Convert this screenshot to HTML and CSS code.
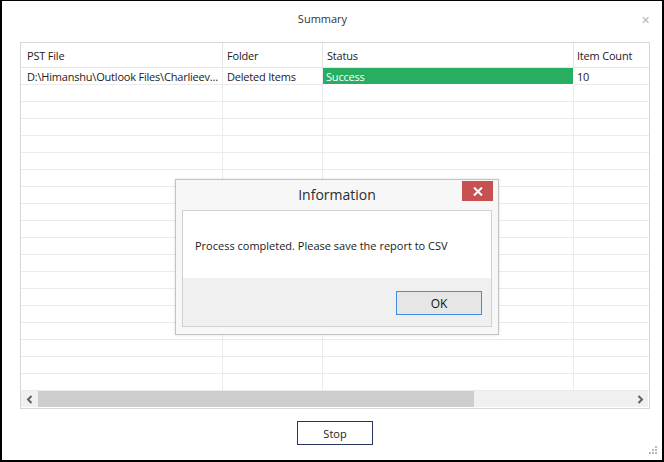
FILE: index.html
```html
<!DOCTYPE html>
<html>
<head>
<meta charset="utf-8">
<link rel="stylesheet" href="styles.css">
</head>
<body>
<div class="window">
  <div class="titlebar">
    <span class="title">Summary</span>
    <span class="close">&#x2715;</span>
  </div>
  <div class="grid">
    <div class="row head">
      <div class="cell c1">PST File</div>
      <div class="cell c2">Folder</div>
      <div class="cell c3">Status</div>
      <div class="cell c4">Item Count</div>
    </div>
    <div class="body">
      <div class="row">
        <div class="cell c1">D:\Himanshu\Outlook Files\Charlieev...</div>
        <div class="cell c2">Deleted Items</div>
        <div class="cell c3 ok">Success</div>
        <div class="cell c4">10</div>
      </div>
      <div class="row"><div class="cell c1"></div><div class="cell c2"></div><div class="cell c3"></div><div class="cell c4"></div></div>
      <div class="row"><div class="cell c1"></div><div class="cell c2"></div><div class="cell c3"></div><div class="cell c4"></div></div>
      <div class="row"><div class="cell c1"></div><div class="cell c2"></div><div class="cell c3"></div><div class="cell c4"></div></div>
      <div class="row"><div class="cell c1"></div><div class="cell c2"></div><div class="cell c3"></div><div class="cell c4"></div></div>
      <div class="row"><div class="cell c1"></div><div class="cell c2"></div><div class="cell c3"></div><div class="cell c4"></div></div>
      <div class="row"><div class="cell c1"></div><div class="cell c2"></div><div class="cell c3"></div><div class="cell c4"></div></div>
      <div class="row"><div class="cell c1"></div><div class="cell c2"></div><div class="cell c3"></div><div class="cell c4"></div></div>
      <div class="row"><div class="cell c1"></div><div class="cell c2"></div><div class="cell c3"></div><div class="cell c4"></div></div>
      <div class="row"><div class="cell c1"></div><div class="cell c2"></div><div class="cell c3"></div><div class="cell c4"></div></div>
      <div class="row"><div class="cell c1"></div><div class="cell c2"></div><div class="cell c3"></div><div class="cell c4"></div></div>
      <div class="row"><div class="cell c1"></div><div class="cell c2"></div><div class="cell c3"></div><div class="cell c4"></div></div>
      <div class="row"><div class="cell c1"></div><div class="cell c2"></div><div class="cell c3"></div><div class="cell c4"></div></div>
      <div class="row"><div class="cell c1"></div><div class="cell c2"></div><div class="cell c3"></div><div class="cell c4"></div></div>
      <div class="row"><div class="cell c1"></div><div class="cell c2"></div><div class="cell c3"></div><div class="cell c4"></div></div>
      <div class="row"><div class="cell c1"></div><div class="cell c2"></div><div class="cell c3"></div><div class="cell c4"></div></div>
      <div class="row"><div class="cell c1"></div><div class="cell c2"></div><div class="cell c3"></div><div class="cell c4"></div></div>
      <div class="row"><div class="cell c1"></div><div class="cell c2"></div><div class="cell c3"></div><div class="cell c4"></div></div>
      <div class="row"><div class="cell c1"></div><div class="cell c2"></div><div class="cell c3"></div><div class="cell c4"></div></div>
    </div>
    <div class="hscroll">
      <span class="arrow"><svg width="8" height="9" viewBox="0 0 8 9"><path d="M5.5 1 L2 4.5 L5.5 8" fill="none" stroke="#606060" stroke-width="2"/></svg></span>
      <div class="track"><div class="thumb"></div></div>
      <span class="arrow"><svg width="8" height="9" viewBox="0 0 8 9"><path d="M2.5 1 L6 4.5 L2.5 8" fill="none" stroke="#606060" stroke-width="2"/></svg></span>
    </div>
  </div>
  <div class="footer">
    <button class="stop">Stop</button>
  </div>
  <svg class="grip" width="8" height="8" viewBox="0 0 8 8">
    <rect x="6" y="0" width="2" height="2" fill="#b8b8b8"/>
    <rect x="3" y="3" width="2" height="2" fill="#b8b8b8"/>
    <rect x="6" y="3" width="2" height="2" fill="#b8b8b8"/>
    <rect x="0" y="6" width="2" height="2" fill="#b8b8b8"/>
    <rect x="3" y="6" width="2" height="2" fill="#b8b8b8"/>
    <rect x="6" y="6" width="2" height="2" fill="#b8b8b8"/>
  </svg>

  <div class="dialog">
    <div class="dlg-title">
      <span class="dlg-caption">Information</span>
      <span class="dlg-close"><svg width="10" height="9" viewBox="0 0 10 9"><path d="M1 0.5 L9 8.5 M9 0.5 L1 8.5" stroke="#fff" stroke-width="2"/></svg></span>
    </div>
    <div class="dlg-body">
      <div class="dlg-msg">Process completed. Please save the report to CSV</div>
      <div class="dlg-buttons"><button class="okbtn">OK</button></div>
    </div>
  </div>
</div>
</body>
</html>
```

FILE: styles.css
```css
* { box-sizing: border-box; }
html, body { margin: 0; padding: 0; background: #fff; }
body { font-family: "Open Sans", "Noto Sans", sans-serif; color: #1a1a1a; }

.window {
  position: relative;
  width: 664px;
  height: 462px;
  border: 1px solid #000;
  border-left-width: 2px;
  border-right-width: 2px;
  border-bottom-width: 2px;
  background: #fff;
  overflow: hidden;
}

.titlebar {
  height: 41px;
  display: flex;
  align-items: center;
  justify-content: center;
  position: relative;
}
.title {
  font-size: 11px;
  color: #333;
  margin-top: -7px;
  margin-left: -19px;
}
.close {
  position: absolute;
  right: 12px;
  top: 11px;
  font-size: 11px;
  color: #b5b5b5;
}

.grid {
  margin-left: 18px;
  width: 630px;
  height: 367px;
  border: 1px solid #d6d6d6;
  display: flex;
  flex-direction: column;
  font-family: "Open Sans", sans-serif;
  font-size: 11px;
  color: #222;
}
.row {
  display: flex;
  height: 17px;
  flex: none;
}
.row.head { height: 25px; }
.cell {
  border-right: 1px solid #ebebeb;
  border-bottom: 1px solid #ebebeb;
  padding-left: 5px;
  white-space: nowrap;
  overflow: hidden;
  display: flex;
  align-items: center;
  letter-spacing: -0.2px;
}
.head .cell { border-bottom-color: #e4e4e4; border-right-color: #e4e4e4; padding-top: 1px; }
.c1 { width: 202px; padding-left: 6px; }
.c2 { width: 100px; padding-left: 4px; }
.c3 { width: 251px; padding-left: 4px; }
.c4 { flex: 1; border-right: none; padding-left: 3px; }
.ok { background: #27ae60; color: #fff; border-right-color: #fff; border-bottom-color: #fff; padding-left: 3px; }

.body {
  height: 323px;
  overflow: hidden;
  flex: none;
}

.hscroll {
  height: 16px;
  margin: 0 1px 0 0;
  display: flex;
  align-items: stretch;
  background: #f0f0f0;
  flex: none;
}
.arrow {
  width: 17px;
  display: flex;
  align-items: center;
  justify-content: center;
}
.track { flex: 1; position: relative; }
.thumb {
  position: absolute;
  left: 0;
  top: 0;
  width: 436px;
  height: 100%;
  background: #cdcdcd;
}

.footer {
  display: flex;
  justify-content: center;
  padding-top: 12px;
  padding-left: 6px;
}
.stop {
  width: 76px;
  height: 24px;
  border: 1px solid #24365f;
  background: #fff;
  font-family: "Open Sans", sans-serif;
  font-size: 11px;
  color: #222;
  padding: 0;
}

.grip {
  position: absolute;
  right: 5px;
  bottom: 6px;
}

.dialog {
  position: absolute;
  left: 173px;
  top: 178px;
  width: 324px;
  height: 156px;
  border: 1px solid #c3c3c3;
  background: #f7f7f7;
  box-shadow: 0 0 3px rgba(0,0,0,0.12);
  padding: 0 6px 7px 6px;
  display: flex;
  flex-direction: column;
}
.dlg-title {
  height: 30px;
  position: relative;
  display: flex;
  justify-content: center;
  align-items: center;
  flex: none;
}
.dlg-caption {
  font-family: "Open Sans", sans-serif;
  font-size: 14px;
  color: #2b2b2b;
  margin-left: 0;
  margin-top: -1px;
}
.dlg-close {
  position: absolute;
  right: -1px;
  top: 1px;
  width: 31px;
  height: 20px;
  background: #c75050;
  display: flex;
  align-items: center;
  justify-content: center;
}
.dlg-body {
  flex: 1;
  border: 1px solid #d0d0d0;
  background: #fff;
  display: flex;
  flex-direction: column;
}
.dlg-msg {
  height: 67px;
  padding-left: 12px;
  display: flex;
  align-items: center;
  font-family: "Open Sans", sans-serif;
  font-size: 11px;
  color: #1a1a1a;
  padding-top: 1px;
}
.dlg-buttons {
  flex: 1;
  background: #f0f0f0;
  display: flex;
  justify-content: flex-end;
  align-items: flex-start;
  padding: 13px 9px 0 0;
}
.okbtn {
  width: 86px;
  height: 24px;
  border: 1px solid #3d8ee0;
  background: #e6e6e6;
  font-family: "Open Sans", sans-serif;
  font-size: 12px;
  color: #111;
  padding: 0;
}
```
